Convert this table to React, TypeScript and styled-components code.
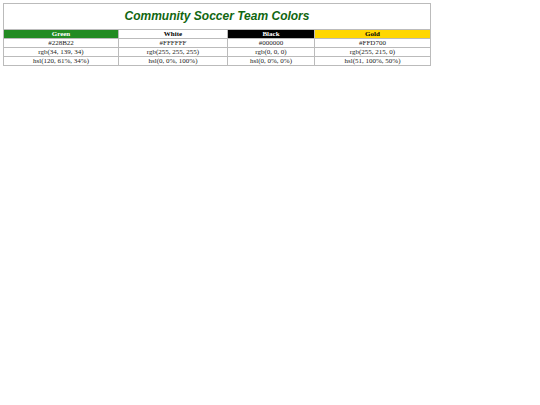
import styled, { createGlobalStyle } from 'styled-components';

const GlobalStyle = createGlobalStyle`
  html, body {
    margin: 0;
    padding: 0;
    background: #ffffff;
  }
  body {
    padding: 3px;
    font-family: "Liberation Serif", "Times New Roman", serif;
  }
`;

const colors = [
  { name: 'Green', hex: '#228B22', rgb: 'rgb(34, 139, 34)', hsl: 'hsl(120, 61%, 34%)', text: '#ffffff', width: 115 },
  { name: 'White', hex: '#FFFFFF', rgb: 'rgb(255, 255, 255)', hsl: 'hsl(0, 0%, 100%)', text: '#000000', width: 109 },
  { name: 'Black', hex: '#000000', rgb: 'rgb(0, 0, 0)', hsl: 'hsl(0, 0%, 0%)', text: '#ffffff', width: 87 },
  { name: 'Gold', hex: '#FFD700', rgb: 'rgb(255, 215, 0)', hsl: 'hsl(51, 100%, 50%)', text: '#000000', width: 116 },
];

const Table = styled.table`
  border-collapse: collapse;
  width: 427px;
  table-layout: fixed;
  border: 1px solid #bbbbbb;
`;

const TitleCell = styled.th`
  height: 24px;
  padding: 0 0 1px;
  text-align: center;
  font-family: "Liberation Sans", Arial, sans-serif;
  font-style: italic;
  font-weight: bold;
  font-size: 12px;
  color: #116611;
  border: 1px solid #bbbbbb;
`;

const HeadCell = styled.th<{ $bg: string; $fg: string }>`
  background: ${(p) => p.$bg};
  color: ${(p) => p.$fg};
  font-size: 7px;
  font-weight: bold;
  height: 8px;
  line-height: 8px;
  padding: 0;
  text-align: center;
  border: 1px solid #bbbbbb;
`;

const Cell = styled.td`
  font-size: 7px;
  height: 8px;
  line-height: 8px;
  padding: 0;
  text-align: center;
  color: #222222;
  border: 1px solid #bbbbbb;
`;

export default function App() {
  return (
    <>
      <GlobalStyle />
      <Table>
        <colgroup>
          {colors.map((c) => (
            <col key={c.name} style={{ width: c.width }} />
          ))}
        </colgroup>
        <thead>
          <tr>
            <TitleCell colSpan={4}>Community Soccer Team Colors</TitleCell>
          </tr>
          <tr>
            {colors.map((c) => (
              <HeadCell key={c.name} $bg={c.hex} $fg={c.text}>
                {c.name}
              </HeadCell>
            ))}
          </tr>
        </thead>
        <tbody>
          <tr>
            {colors.map((c) => (
              <Cell key={c.name}>{c.hex}</Cell>
            ))}
          </tr>
          <tr>
            {colors.map((c) => (
              <Cell key={c.name}>{c.rgb}</Cell>
            ))}
          </tr>
          <tr>
            {colors.map((c) => (
              <Cell key={c.name}>{c.hsl}</Cell>
            ))}
          </tr>
        </tbody>
      </Table>
    </>
  );
}
